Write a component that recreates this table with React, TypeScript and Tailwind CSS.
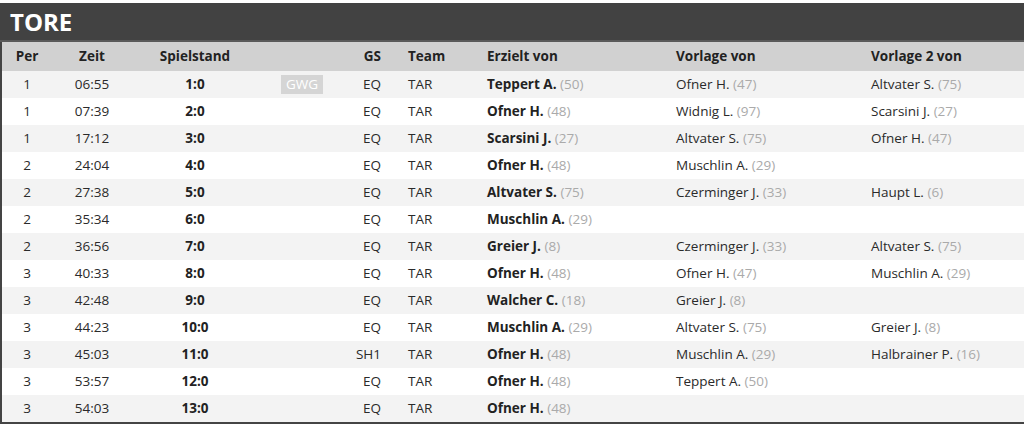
import React from 'react';

interface Player {
  name: string;
  num: number;
}

interface GoalRow {
  per: number;
  zeit: string;
  stand: string;
  gwg?: boolean;
  gs: string;
  team: string;
  scorer: Player;
  assist1?: Player;
  assist2?: Player;
}

const goals: GoalRow[] = [
  { per: 1, zeit: "06:55", stand: "1:0", gwg: true, gs: "EQ", team: "TAR", scorer: { name: "Teppert A.", num: 50 }, assist1: { name: "Ofner H.", num: 47 }, assist2: { name: "Altvater S.", num: 75 } },
  { per: 1, zeit: "07:39", stand: "2:0", gs: "EQ", team: "TAR", scorer: { name: "Ofner H.", num: 48 }, assist1: { name: "Widnig L.", num: 97 }, assist2: { name: "Scarsini J.", num: 27 } },
  { per: 1, zeit: "17:12", stand: "3:0", gs: "EQ", team: "TAR", scorer: { name: "Scarsini J.", num: 27 }, assist1: { name: "Altvater S.", num: 75 }, assist2: { name: "Ofner H.", num: 47 } },
  { per: 2, zeit: "24:04", stand: "4:0", gs: "EQ", team: "TAR", scorer: { name: "Ofner H.", num: 48 }, assist1: { name: "Muschlin A.", num: 29 } },
  { per: 2, zeit: "27:38", stand: "5:0", gs: "EQ", team: "TAR", scorer: { name: "Altvater S.", num: 75 }, assist1: { name: "Czerminger J.", num: 33 }, assist2: { name: "Haupt L.", num: 6 } },
  { per: 2, zeit: "35:34", stand: "6:0", gs: "EQ", team: "TAR", scorer: { name: "Muschlin A.", num: 29 } },
  { per: 2, zeit: "36:56", stand: "7:0", gs: "EQ", team: "TAR", scorer: { name: "Greier J.", num: 8 }, assist1: { name: "Czerminger J.", num: 33 }, assist2: { name: "Altvater S.", num: 75 } },
  { per: 3, zeit: "40:33", stand: "8:0", gs: "EQ", team: "TAR", scorer: { name: "Ofner H.", num: 48 }, assist1: { name: "Ofner H.", num: 47 }, assist2: { name: "Muschlin A.", num: 29 } },
  { per: 3, zeit: "42:48", stand: "9:0", gs: "EQ", team: "TAR", scorer: { name: "Walcher C.", num: 18 }, assist1: { name: "Greier J.", num: 8 } },
  { per: 3, zeit: "44:23", stand: "10:0", gs: "EQ", team: "TAR", scorer: { name: "Muschlin A.", num: 29 }, assist1: { name: "Altvater S.", num: 75 }, assist2: { name: "Greier J.", num: 8 } },
  { per: 3, zeit: "45:03", stand: "11:0", gs: "SH1", team: "TAR", scorer: { name: "Ofner H.", num: 48 }, assist1: { name: "Muschlin A.", num: 29 }, assist2: { name: "Halbrainer P.", num: 16 } },
  { per: 3, zeit: "53:57", stand: "12:0", gs: "EQ", team: "TAR", scorer: { name: "Ofner H.", num: 48 }, assist1: { name: "Teppert A.", num: 50 } },
  { per: 3, zeit: "54:03", stand: "13:0", gs: "EQ", team: "TAR", scorer: { name: "Ofner H.", num: 48 } },
];

// shared column template so header and rows line up
const cols = "grid grid-cols-[50px_80px_126px_88px_44px_89px_189px_195px_1fr] items-center";

function PlayerCell({ player, bold }: { player?: Player; bold?: boolean }) {
  if (!player) return <div />;
  return (
    <div className="pl-2 whitespace-nowrap">
      <span className={bold ? "font-bold text-[#222]" : ""}>{player.name}</span>{" "}
      <span className="text-[#aaa]">({player.num})</span>
    </div>
  );
}

export default function App() {
  return (
    <div className="pt-[3px] bg-white text-[13.5px] text-[#2a2a2a] font-['Open_Sans',sans-serif]">
      <div className="h-[37px] bg-[#424242] flex items-center pl-[10px] border-b-2 border-[#5a5a5a] box-content">
        <h2 className="text-white text-[24px] font-bold leading-none">TORE</h2>
      </div>
      <div className="border-l-2 border-b-2 border-[#444]">
        <div className={`${cols} h-[29px] bg-[#d1d1d1] font-bold text-[#222]`}>
          <div className="text-center">Per</div>
          <div className="text-center">Zeit</div>
          <div className="text-center">Spielstand</div>
          <div />
          <div className="text-right pr-[9px]">GS</div>
          <div className="pl-[18px]">Team</div>
          <div className="pl-2">Erzielt von</div>
          <div className="pl-2">Vorlage von</div>
          <div className="pl-2">Vorlage 2 von</div>
        </div>
        {goals.map((g, i) => (
          <div key={i} className={`${cols} h-[27px] ${i % 2 === 0 ? "bg-[#f3f3f3]" : "bg-white"}`}>
            <div className="text-center">{g.per}</div>
            <div className="text-center">{g.zeit}</div>
            <div className="text-center font-bold text-[#222]">{g.stand}</div>
            <div className="text-center">
              {g.gwg && (
                <span className="inline-block bg-[#d5d5d5] text-white px-[5px] leading-[19px]">GWG</span>
              )}
            </div>
            <div className="text-right pr-[9px]">{g.gs}</div>
            <div className="pl-[18px]">{g.team}</div>
            <PlayerCell player={g.scorer} bold />
            <PlayerCell player={g.assist1} />
            <PlayerCell player={g.assist2} />
          </div>
        ))}
      </div>
    </div>
  );
}
